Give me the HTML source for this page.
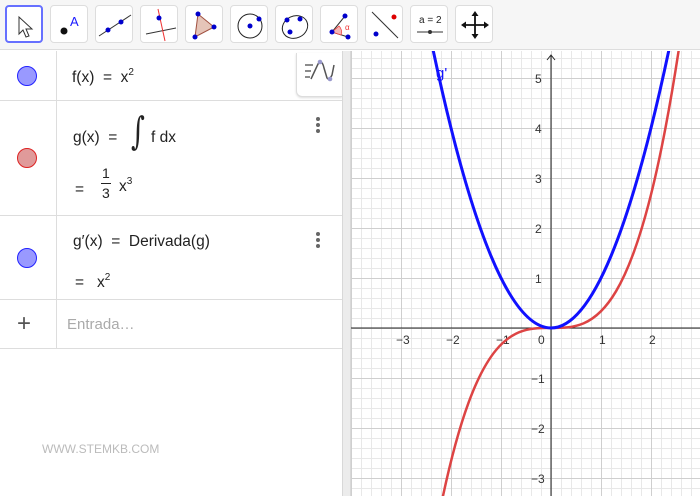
<!DOCTYPE html>
<html><head><meta charset="utf-8"><style>
*{margin:0;padding:0;box-sizing:border-box}
body{width:700px;height:496px;overflow:hidden;background:#fff;font-family:"Liberation Sans","DejaVu Sans",sans-serif;position:relative}
#tb{position:absolute;left:0;top:0;width:700px;height:50px;background:#f6f6f6;border-bottom:1px solid #ddd}
.b{position:absolute;top:5px;width:38px;height:38px;background:#fff;border:1px solid #ddd;border-radius:4px}
.b svg{position:absolute;left:0;top:0}
#panel{position:absolute;left:0;top:51px;width:342px;height:445px;background:#fff}
.row{position:absolute;left:0;width:342px;border-bottom:1px solid #ddd}
.col{position:absolute;left:56px;top:0;bottom:0;border-left:1px solid #ddd}
.dot{position:absolute;left:17px;width:20px;height:20px;border-radius:50%}
.t{position:absolute;font-size:15.5px;color:#222;white-space:nowrap}
sup{font-size:10px;vertical-align:7px}
.menu{position:absolute;left:316px;width:4px}
.menu i{display:block;width:4px;height:4px;border-radius:2px;background:#666;margin-bottom:2px}
</style></head><body>
<div id="tb">
 <div class="b" style="left:5px;border:2px solid #6670ff"><svg width="38" height="38"><path d="M12 10 L12 27 L16 23 L19 30 L22 29 L19 22 L25 22 Z" fill="#fff" stroke="#333" stroke-width="1"/></svg></div>
 <div class="b" style="left:50px"><svg width="38" height="38"><circle cx="13" cy="25" r="3.5" fill="#111"/><text x="19" y="20" font-size="13" fill="#1a1aff" font-family="Liberation Sans">A</text></svg></div>
 <div class="b" style="left:95px"><svg width="38" height="38"><line x1="3" y1="30" x2="35" y2="9" stroke="#333"/><circle cx="12" cy="24" r="2.5" fill="#00c"/><circle cx="25" cy="16" r="2.5" fill="#00c"/></svg></div>
 <div class="b" style="left:140px"><svg width="38" height="38"><line x1="5" y1="28" x2="35" y2="22" stroke="#333"/><line x1="17" y1="3" x2="24" y2="35" stroke="#e33"/><circle cx="18" cy="12" r="2.5" fill="#00c"/></svg></div>
 <div class="b" style="left:185px"><svg width="38" height="38"><path d="M12 8 L28 21 L9 31 Z" fill="#e5c4b8" stroke="#a05040"/><circle cx="12" cy="8" r="2.5" fill="#00c"/><circle cx="28" cy="21" r="2.5" fill="#00c"/><circle cx="9" cy="31" r="2.5" fill="#00c"/></svg></div>
 <div class="b" style="left:230px"><svg width="38" height="38"><circle cx="19" cy="20" r="12" fill="none" stroke="#222"/><circle cx="19" cy="20" r="2.5" fill="#00c"/><circle cx="28" cy="13" r="2.5" fill="#00c"/></svg></div>
 <div class="b" style="left:275px"><svg width="38" height="38"><ellipse cx="19" cy="21" rx="13" ry="11" fill="none" stroke="#222" transform="rotate(-25 19 21)"/><circle cx="11" cy="14" r="2.5" fill="#00c"/><circle cx="24" cy="13" r="2.5" fill="#00c"/><circle cx="14" cy="26" r="2.5" fill="#00c"/></svg></div>
 <div class="b" style="left:320px"><svg width="38" height="38"><path d="M11 26 L24 10 M11 26 L27 31" stroke="#333"/><path d="M11 26 L18 20 A8 8 0 0 1 20 29 Z" fill="#f4b6b6" stroke="#e33" stroke-width=".7"/><circle cx="24" cy="10" r="2.5" fill="#00c"/><circle cx="11" cy="26" r="2.5" fill="#00c"/><circle cx="27" cy="31" r="2.5" fill="#00c"/><text x="24" y="24" font-size="8" fill="#e33">α</text></svg></div>
 <div class="b" style="left:365px"><svg width="38" height="38"><line x1="6" y1="6" x2="32" y2="32" stroke="#333"/><circle cx="28" cy="11" r="2.5" fill="#d00"/><circle cx="10" cy="28" r="2.5" fill="#00c"/></svg></div>
 <div class="b" style="left:410px"><svg width="38" height="38"><text x="8" y="17" font-size="10" fill="#222" font-family="Liberation Sans">a = 2</text><line x1="6" y1="26" x2="32" y2="26" stroke="#333"/><circle cx="19" cy="26" r="2" fill="#333"/></svg></div>
 <div class="b" style="left:455px"><svg width="38" height="38"><path d="M19 7 V31 M7 19 H31" stroke="#111" stroke-width="1.8"/><path d="M19 5 L15.5 10 H22.5Z M19 33 L15.5 28 H22.5Z M5 19 L10 15.5 V22.5Z M33 19 L28 15.5 V22.5Z" fill="#111"/></svg></div>
</div>

<div id="panel">
 <div class="row" style="top:0;height:50px"><div class="col"></div><div class="dot" style="top:15px;background:#99f;border:1px solid #22f"></div><div class="t" style="left:72px;top:16px">f(x) &nbsp;= &nbsp;x<sup>2</sup></div></div>
 <div style="position:absolute;left:296px;top:2px;width:46px;height:44px;background:#fff;border-left:1px solid #ddd;border-bottom:1px solid #ddd;border-radius:0 0 0 6px;box-shadow:0 1px 2px #ddd"><svg width="46" height="44"><path d="M8 12 H16 M8 18 H14 M8 24 H13" stroke="#666" stroke-width="1.5"/><path d="M14 26 L21 11 Q25 6 27 15 L30 25 Q32 28 35 22 L37 12" fill="none" stroke="#555" stroke-width="1.5"/><circle cx="23" cy="9" r="2.3" fill="#99c"/><circle cx="33" cy="26" r="2.3" fill="#99c"/></svg></div>
 <div class="row" style="top:50px;height:115px"><div class="col"></div><div class="dot" style="top:47px;background:#e09a9a;border:1px solid #d22"></div>
  <div class="t" style="left:73px;top:28px">g(x) &nbsp;= </div>
  <div class="t" style="left:128px;top:8px;font-size:38px;font-family:'DejaVu Serif',serif;font-style:italic;font-weight:100;transform:scaleX(0.7)">∫</div>
  <div class="t" style="left:151px;top:28px">f dx</div>
  <div class="t" style="left:75px;top:80px">=</div>
  <div class="t" style="left:102px;top:64px;font-size:14px">1</div>
  <div style="position:absolute;left:101px;top:82px;width:10px;border-top:1px solid #222"></div>
  <div class="t" style="left:102px;top:84px;font-size:14px">3</div>
  <div class="t" style="left:119px;top:75px">x<sup>3</sup></div>
  <div class="menu" style="top:16px"><i></i><i></i><i></i></div>
 </div>
 <div class="row" style="top:165px;height:84px"><div class="col"></div><div class="dot" style="top:32px;background:#99f;border:1px solid #22f"></div>
  <div class="t" style="left:73px;top:17px">g′(x) &nbsp;= &nbsp;Derivada(g)</div>
  <div class="t" style="left:75px;top:56px">= &nbsp;&nbsp;x<sup>2</sup></div>
  <div class="menu" style="top:16px"><i></i><i></i><i></i></div>
 </div>
 <div class="row" style="top:249px;height:49px"><div class="col"></div>
  <div class="t" style="left:17px;top:10px;font-size:24px;color:#555;font-weight:300">+</div>
  <div class="t" style="left:67px;top:16px;color:#aaa;font-size:15px">Entrada…</div>
 </div>
 <div class="t" style="left:42px;top:391px;font-size:12px;color:#bbb">WWW.STEMKB.COM</div>
</div>
<div style="position:absolute;left:342px;top:51px;width:9px;height:445px;background:#ececec;border-left:1px solid #d8d8d8;border-right:1px solid #d8d8d8"></div>

<svg style="position:absolute;left:0;top:0" width="700" height="496">
 <defs>
  <pattern id="mn" patternUnits="userSpaceOnUse" x="1" y="8" width="10" height="10"><path d="M0.5 0 V10 M0 0.5 H10" stroke="#e8e8e8" stroke-width="1"/></pattern>
  <pattern id="mj" patternUnits="userSpaceOnUse" x="1" y="28" width="50" height="50"><path d="M0 0 V50 M0 0 H50" stroke="#cfcfcf" stroke-width="2"/></pattern>
  <clipPath id="c"><rect x="351" y="51" width="349" height="445"/></clipPath>
 </defs>
 <g clip-path="url(#c)">
  <rect x="351" y="51" width="349" height="445" fill="url(#mn)"/>
  <rect x="351" y="51" width="349" height="445" fill="url(#mj)"/>
  <line x1="351" y1="328" x2="700" y2="328" stroke="#222" stroke-width="1"/>
  <line x1="551" y1="56" x2="551" y2="496" stroke="#222" stroke-width="1"/>
  <path d="M547 60 L551 55 L555 60" fill="none" stroke="#222"/>
  <g font-size="12" fill="#333" font-family="Liberation Sans">
   <text x="396" y="344">−3</text><text x="446" y="344">−2</text><text x="496" y="344">−1</text><text x="538" y="344">0</text><text x="599" y="344">1</text><text x="649" y="344">2</text>
   <text x="535" y="83">5</text><text x="535" y="133">4</text><text x="535" y="183">3</text><text x="535" y="233">2</text><text x="535" y="283">1</text>
   <text x="531" y="383">−1</text><text x="531" y="433">−2</text><text x="531" y="483">−3</text>
  </g>
  <path d="M441 505.4 C521 118.2 601 575.8 681 35" fill="none" stroke="#d44" stroke-width="2.5"/>
  <path d="M431 40 Q551 616 671 40" fill="none" stroke="#11f" stroke-width="3"/>
  <text x="436" y="78" font-size="15" fill="#11f" font-family="Liberation Sans">g'</text>
 </g>
</svg>
</body></html>
